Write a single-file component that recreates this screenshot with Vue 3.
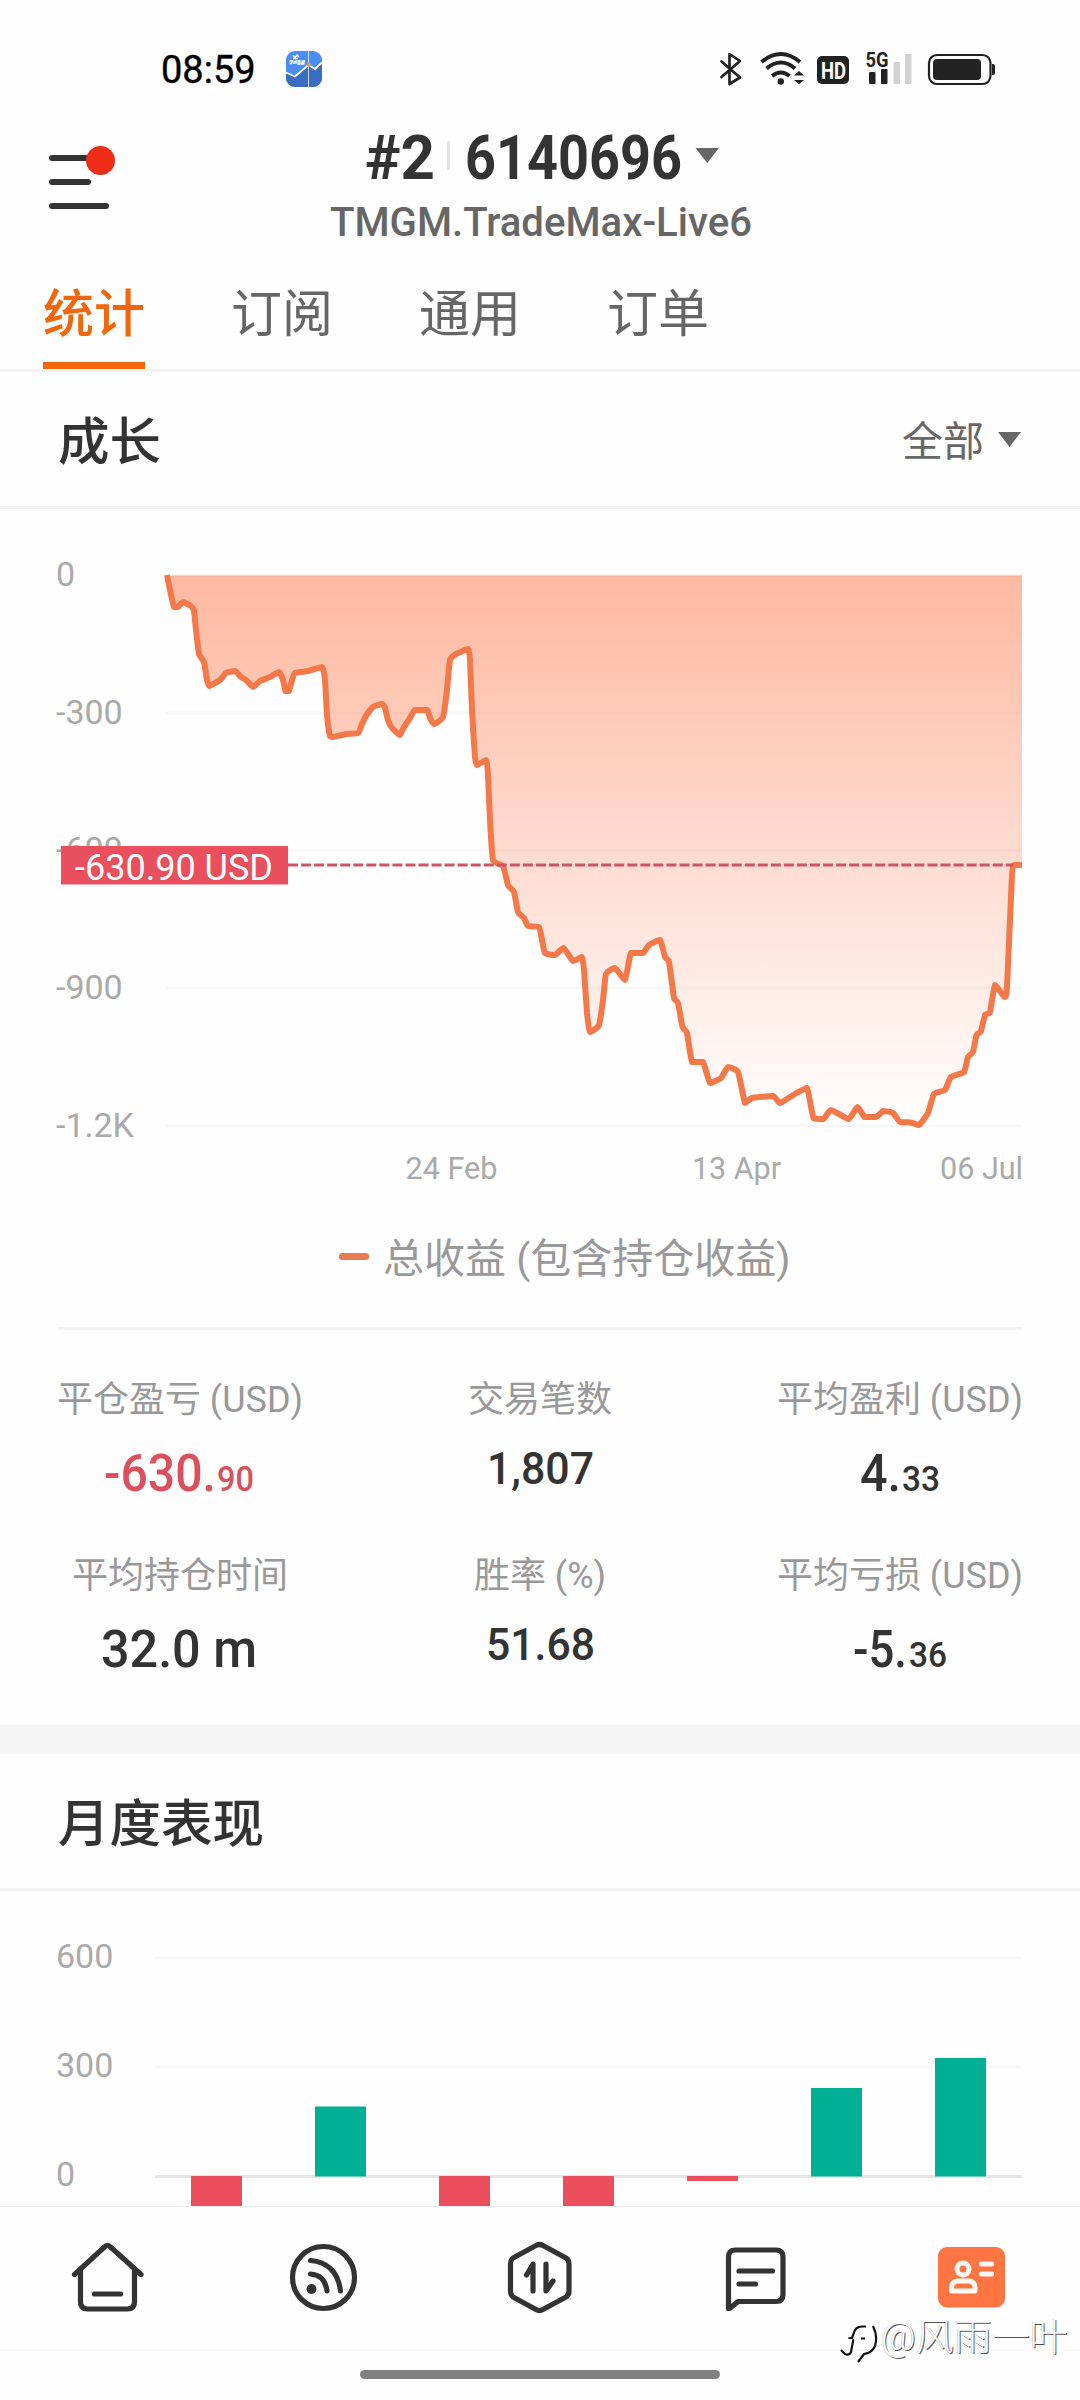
<script setup>
const tabs = ['统计', '订阅', '通用', '订单']

const points = [
  [167, 575], [170, 590], [174, 607], [178, 607], [183, 602], [191, 606], [194, 611], [196, 630], [199, 654],
  [204, 662], [207, 680], [209.5, 686], [215, 683], [220, 680], [226, 673], [235, 671], [241, 677], [246, 680],
  [253, 687], [260, 681], [270, 677], [279, 672], [283, 680], [285.5, 691], [289, 691], [292, 680], [295, 673],
  [308, 671], [322, 667], [325, 680], [327, 715], [330, 736], [333, 737], [346, 734], [358, 733], [362, 724],
  [366, 716], [373, 707], [382, 704], [385, 708], [388, 720], [392, 728], [400, 735], [404, 727], [410, 718],
  [415, 710], [427, 710], [430, 718], [434, 724], [443, 717], [447, 690], [450, 660], [456, 654], [468, 649],
  [470, 660], [472, 710], [475, 757], [477, 765], [486, 760], [488, 775], [490, 820], [493, 860], [503, 866],
  [508, 885], [514, 892], [518, 912], [524, 918], [528, 926], [539, 927], [542, 940], [545, 953], [555, 955],
  [563.5, 948], [573, 961], [582, 957], [584, 970], [587, 1013], [590, 1032], [599, 1025], [603, 1000],
  [606, 974], [615, 968], [625, 980], [631, 953], [643, 953], [649, 945], [660, 940], [665, 957], [669, 962],
  [674, 998], [678, 1003], [682.5, 1027], [687, 1033], [692, 1062], [703, 1062], [710, 1083], [721, 1078],
  [728, 1067], [738, 1072], [745, 1103], [752, 1098], [773, 1096], [780, 1103], [795, 1094], [807, 1088],
  [813.5, 1118], [823.5, 1119], [831, 1110], [848.5, 1119], [857.5, 1107], [864.6, 1117], [876, 1117],
  [883.5, 1111], [893, 1113], [900, 1122], [911, 1122.5], [919, 1125], [928, 1113], [934, 1094], [945, 1090],
  [951, 1077], [964, 1072], [968, 1057], [973, 1052], [976.5, 1035], [981, 1031], [985, 1015], [990, 1012],
  [995, 985], [1004.6, 997], [1007, 987], [1012, 875], [1014, 865], [1022, 865],
]

const smooth = (pts, k = 0.08) => {
  let d = `M${pts[0][0]} ${pts[0][1]}`
  for (let i = 0; i < pts.length - 1; i++) {
    const a = pts[i - 1] || pts[i]
    const b = pts[i]
    const c = pts[i + 1]
    const e = pts[i + 2] || c
    const lo = Math.min(b[1], c[1])
    const hi = Math.max(b[1], c[1])
    const clamp = (v) => Math.max(lo, Math.min(hi, v))
    d += `C${b[0] + (c[0] - a[0]) * k} ${clamp(b[1] + (c[1] - a[1]) * k)} ${c[0] - (e[0] - b[0]) * k} ${clamp(c[1] - (e[1] - b[1]) * k)} ${c[0]} ${c[1]}`
  }
  return d
}
const line = smooth(points)
const area = `${line}L1022 575.5L167 575.5Z`

const growthAxis = [
  { t: '0', y: 575.5 },
  { t: '-300', y: 713 },
  { t: '-600', y: 850.5 },
  { t: '-900', y: 988 },
  { t: '-1.2K', y: 1126 },
]

// x / w position each run of digits inside a 300px wide cell
const stats = [
  { label: '平仓盈亏 (USD)', red: true, base: 61, runs: [{ t: '-630.', x: 74, w: 112, s: 51 }, { t: '90', x: 187, w: 37, s: 35 }] },
  { label: '交易笔数', base: 54, runs: [{ t: '1,807', x: 97, w: 107, s: 45 }] },
  { label: '平均盈利 (USD)', base: 61, runs: [{ t: '4.', x: 110, w: 41, s: 51 }, { t: '33', x: 152, w: 38, s: 35 }] },
  { label: '平均持仓时间', base: 61, runs: [{ t: '32.0 m', x: 71, w: 156, s: 51 }] },
  { label: '胜率 (%)', base: 54, runs: [{ t: '51.68', x: 96, w: 109, s: 45 }] },
  { label: '平均亏损 (USD)', base: 61, runs: [{ t: '-5.', x: 103, w: 54, s: 51 }, { t: '36', x: 159, w: 38, s: 35 }] },
]

const monthAxis = [
  { t: '600', y: 1958, c: '#f7f7f7' },
  { t: '300', y: 2067, c: '#f7f7f7' },
  { t: '0', y: 2176.5, c: '#e6e6e6' },
]
const bars = [
  { x: 191, y: 2176, h: 40 },
  { x: 315, y: 2106.5, h: 70, up: true },
  { x: 439, y: 2176, h: 40 },
  { x: 563, y: 2176, h: 40 },
  { x: 687, y: 2176, h: 5 },
  { x: 811, y: 2088, h: 88.5, up: true },
  { x: 935, y: 2058, h: 118.5, up: true },
]
</script>

<template>
  <div class="screen">
    <div class="status">
      <div class="status-left">
        <span class="clock">08:59</span>
        <svg width="36" height="36" viewBox="0 0 36 36">
          <clipPath id="appclip"><rect width="36" height="36" rx="9" /></clipPath>
          <g clip-path="url(#appclip)">
            <rect width="36" height="36" fill="#4a8df5" />
            <path d="M0 21.500 9 25.500 22.500 14 29 18 36 11.500V36H0Z" fill="#3a6cc0" />
            <path d="M0 21.500 9 25.500 22.500 14 29 18 36 11.500" fill="none" stroke="#fff" stroke-width="1.800" />
            <path d="M22.500 0V36" stroke="#cfdcf2" stroke-width="1" />
            <circle cx="22.800" cy="13.500" r="2" fill="#d99a52" />
            <path d="M7 4.500l2 2 2-2.500 2 2M7 7.500h5M3.500 10h3l-1 2.500h-2M8 10v3M8 11l2-1v3M12 10h2v3h-2zM19 10h-3v1.500h2V13h-3" fill="none" stroke="#fff" stroke-width="1.300" />
          </g>
        </svg>
      </div>
      <svg class="status-icons" width="280" height="40" viewBox="718 49 280 40">
        <path d="M721.500 61.500 740 77.500 729.500 84V54L740 61 721.500 77" fill="none" stroke="#222" stroke-width="2.700" stroke-linejoin="round" stroke-linecap="round" />
        <g fill="none" stroke="#222" stroke-width="4">
          <path d="M761.500 62Q781 46 800 62" />
          <path d="M766.500 68.500Q781 56.500 795 68.500" />
          <path d="M772 76Q781 69 789.500 76" />
        </g>
        <circle cx="780.800" cy="81.500" r="3.200" fill="#222" />
        <path d="M794 75.500 799 71 804 75.500ZM794 80 799 84.500 804 80Z" fill="#222" />
        <rect x="817" y="56" width="32" height="28" rx="5" fill="#222" />
        <text x="821" y="78.500" font-size="23.500" font-weight="700" fill="#fff" textLength="25" lengthAdjust="spacingAndGlyphs">HD</text>
        <text x="865.500" y="67" font-size="20" font-weight="700" fill="#222" textLength="23" lengthAdjust="spacingAndGlyphs">5G</text>
        <rect x="869" y="72" width="6.500" height="12" rx="1" fill="#222" />
        <rect x="881" y="69" width="6.500" height="15" rx="1" fill="#222" />
        <rect x="893.500" y="62" width="6.500" height="22" rx="1" fill="#d2d2d2" />
        <rect x="905" y="54" width="6.500" height="30" rx="1" fill="#d2d2d2" />
        <rect x="929" y="55" width="61.500" height="29" rx="8" fill="none" stroke="#222" stroke-width="2.200" />
        <rect x="933" y="59" width="48" height="21" rx="4" fill="#222" />
        <path d="M992 64h1q2 0 2 2v7q0 2-2 2h-1Z" fill="#222" />
      </svg>
    </div>

    <header class="header">
      <svg class="menu" width="70" height="66" viewBox="48 145 70 66">
        <path d="M52 158H106M52 182H88M52 206H106" stroke="#333" stroke-width="6" stroke-linecap="round" />
        <circle cx="100.500" cy="160.500" r="14.500" fill="#ee2d17" />
      </svg>
      <svg class="account" width="440" height="130" viewBox="320 120 440 130">
        <g font-weight="700" font-size="61" fill="#333">
          <text x="365" y="179" textLength="70" lengthAdjust="spacingAndGlyphs">#2</text>
          <text x="465" y="179" textLength="217" lengthAdjust="spacingAndGlyphs">6140696</text>
        </g>
        <rect x="447" y="141" width="3" height="29" fill="#e5e5e5" />
        <path d="M695.500 148H719L707.200 163Z" fill="#666" />
        <text x="330" y="236" font-size="40.500" font-weight="500" fill="#666" textLength="422" lengthAdjust="spacingAndGlyphs">TMGM.TradeMax-Live6</text>
      </svg>
    </header>

    <nav class="tabs">
      <div v-for="(t, i) in tabs" :key="t" class="tab" :class="{ active: i === 0 }">{{ t }}</div>
    </nav>

    <main class="content">
      <div class="section-head growth-head">
        <h2>成长</h2>
        <div class="filter">
          <span>全部</span>
          <svg width="23" height="15" viewBox="0 0 23 15"><path d="M0 0H23L11.500 15Z" fill="#666" /></svg>
        </div>
      </div>

      <svg class="growth" width="1080" height="691" viewBox="0 509 1080 691">
        <defs>
          <linearGradient id="fade" x1="0" y1="575" x2="0" y2="1126" gradientUnits="userSpaceOnUse">
            <stop offset="0" stop-color="#ff7343" stop-opacity="0.5" />
            <stop offset="1" stop-color="#ff7343" stop-opacity="0" />
          </linearGradient>
        </defs>
        <g v-for="g in growthAxis" :key="g.t">
          <rect x="166" :y="g.y - 1.500" width="856" height="3" fill="#f7f7f7" />
          <text x="56" :y="g.y + 10.500" class="axis">{{ g.t }}</text>
        </g>
        <path :d="area" fill="url(#fade)" />
        <path :d="line" fill="none" stroke="#f57848" stroke-width="6" stroke-linejoin="round" />
        <path d="M288 865H1013" stroke="#cf5467" stroke-width="3.200" stroke-dasharray="10 3.050" />
        <rect x="61" y="846" width="227" height="38.500" fill="#e94f5d" />
        <text x="75" y="879.500" font-size="36" fill="#fff" textLength="198" lengthAdjust="spacingAndGlyphs">-630.90 USD</text>
        <g class="dates">
          <text x="405.500" y="1179" textLength="92" lengthAdjust="spacingAndGlyphs">24 Feb</text>
          <text x="692" y="1179" textLength="89" lengthAdjust="spacingAndGlyphs">13 Apr</text>
          <text x="940" y="1179" textLength="83" lengthAdjust="spacingAndGlyphs">06 Jul</text>
        </g>
      </svg>

      <div class="legend"><i></i><span>总收益 (包含持仓收益)</span></div>
      <div class="rule"></div>

      <div class="stats">
        <div v-for="s in stats" :key="s.label" class="stat">
          <div class="label">{{ s.label }}</div>
          <svg width="300" height="80" viewBox="0 0 300 80">
            <text v-for="r in s.runs" :key="r.t" :x="r.x" :y="s.base" :font-size="r.s" :textLength="r.w"
              lengthAdjust="spacingAndGlyphs" font-weight="500" :fill="s.red ? '#dc4f5c' : '#333'">{{ r.t }}</text>
          </svg>
        </div>
      </div>

      <div class="band"></div>
      <div class="section-head month-head"><h2>月度表现</h2></div>

      <svg class="months" width="1080" height="315" viewBox="0 1891 1080 315">
        <g v-for="g in monthAxis" :key="g.t">
          <rect x="155" :y="g.y - 1.500" width="867" height="3" :fill="g.c" />
          <text x="56" :y="g.y + 9.500" class="axis">{{ g.t }}</text>
        </g>
        <rect v-for="b in bars" :key="b.x" :x="b.x" :y="b.y" width="51" :height="b.h" :fill="b.up ? '#00b094' : '#eb4f5e'" />
      </svg>
    </main>

    <footer class="bottom">
      <svg width="76" height="76" viewBox="70 2240 76 76" class="ic">
        <path d="M74.500 2274.500 104.500 2247Q107.500 2243.500 110.500 2247L141 2274.500M80.500 2269V2302Q80.500 2309 87.500 2309H127.500Q134.500 2309 134.500 2302V2269M94.500 2294H120.500" />
      </svg>
      <svg width="76" height="76" viewBox="286 2240 76 76" class="ic">
        <ellipse cx="323.500" cy="2277.500" rx="31" ry="31" />
        <path d="M310.500 2260.500Q337 2263 340.500 2291M310.500 2274Q325 2275 327 2291" />
        <circle cx="311.500" cy="2289" r="5" fill="#333" stroke="none" />
      </svg>
      <svg width="76" height="76" viewBox="502 2240 76 76" class="ic">
        <path d="M536 2245.500Q539.500 2243.500 543 2245.500L566 2258Q569 2260 569 2264V2291Q569 2295 566 2297L543 2309.500Q539.500 2311.500 536 2309.500L513 2297Q510.500 2295 510.500 2291V2264Q510.500 2260 513 2258Z" />
        <path d="M533 2291V2264L526.500 2275M546 2264V2291L553 2281" />
      </svg>
      <svg width="76" height="76" viewBox="718 2240 76 76" class="ic">
        <path d="M728.500 2308.500V2257Q728.500 2250 735.500 2250H776Q783 2250 783 2257V2294.500Q783 2301.500 776 2301.500H738L729.500 2308.500ZM739 2271H772.500M739 2284H755.500" />
      </svg>
      <svg width="76" height="76" viewBox="934 2240 76 76">
        <rect x="938" y="2247" width="67" height="60.500" rx="9" fill="#ff7443" />
        <g fill="none" stroke="#fff8f3" stroke-width="5" stroke-linecap="round" stroke-linejoin="round">
          <circle cx="963" cy="2269" r="6" />
          <path d="M951.500 2291V2288Q951.500 2281 958.500 2281H968Q975 2281 975 2288V2291ZM981.500 2264H991.500M981.500 2274H991.500" />
        </g>
      </svg>
    </footer>
    <div class="gesture"><i></i></div>

    <div class="watermark">
      <svg width="38" height="42" viewBox="840 2324 38 42">
        <path d="M866 2328.500H862Q855 2328.500 853.500 2336L852 2340H848.500M853.500 2341L851 2354Q849 2358 845 2356L841 2352M861 2340.500H865M873 2328Q878 2338 875 2348Q872 2355 864 2356L858 2364" fill="none" stroke="#111" stroke-width="2.200" />
        <path d="M867 2331H863Q858 2331 856 2338L854 2352M871 2330Q875 2339 872 2347Q869 2353 861 2354" fill="none" stroke="#fff" stroke-width="1.600" />
      </svg>
      <span>@风雨一叶</span>
    </div>
  </div>
</template>

<style>
body { margin: 0; background: #fefefe; }
</style>

<style scoped>
.screen {
  position: relative;
  width: 1080px;
  height: 2400px;
  display: flex;
  flex-direction: column;
  overflow: hidden;
  background: #fefefe;
  color: #333;
  font-family: Roboto, "Noto Sans CJK SC", sans-serif;
}
svg { display: block; flex: none; }
.status {
  height: 120px;
  flex: none;
  box-sizing: border-box;
  padding: 49px 82px 0 161px;
  display: flex;
  justify-content: space-between;
  align-items: flex-start;
}
.status-left { display: flex; align-items: center; gap: 28px; height: 40px; }
.clock {
  width: 97px;
  font-size: 38px;
  line-height: 42px;
  padding-top: 2px;
  color: #000;
  white-space: nowrap;
  -webkit-text-stroke: 0.4px #000;
}
.header { height: 149px; flex: none; display: flex; align-items: flex-start; padding-left: 48px; }
.menu { margin-top: 25px; }
.account { margin-left: 202px; }
.tabs {
  height: 103px;
  flex: none;
  box-sizing: border-box;
  border-bottom: 3px solid #f2f2f2;
  padding-left: 43px;
  display: flex;
  gap: 86px;
}
.tab {
  width: 102px;
  height: 100px;
  box-sizing: border-box;
  font-size: 51px;
  line-height: 92px;
  color: #666;
  white-space: nowrap;
}
.tab.active { color: #f4660c; font-weight: 500; border-bottom: 7px solid #f4660c; }
.content { height: 1834px; flex: none; overflow: hidden; }
.section-head {
  box-sizing: border-box;
  display: flex;
  align-items: center;
  justify-content: space-between;
  padding: 0 59px 0 58px;
  border-bottom: 3px solid #f2f2f2;
}
.growth-head { height: 137px; }
.month-head { height: 137px; }
h2 { margin: 0; padding-top: 8px; font-size: 51.5px; font-weight: 500; line-height: 60px; }
.filter { display: flex; align-items: center; gap: 14px; font-size: 41px; line-height: 50px; color: #666; }
.filter span { padding-top: 6px; }
.axis { font-size: 34px; fill: #aaa; }
.dates { font-size: 31px; fill: #aaa; }
.legend {
  height: 127px;
  box-sizing: border-box;
  padding: 34px 0 0 339px;
  display: flex;
  align-items: flex-start;
  font-size: 41px;
  line-height: 50px;
  color: #999;
}
.legend i { width: 30px; height: 7px; margin: 18.500px 14px 0 0; border-radius: 3px; background: #e97c50; }
.rule { height: 3px; margin: 0 58px; background: #f3f3f3; }
.stats {
  height: 395px;
  box-sizing: border-box;
  padding: 47px 30px 0;
  display: grid;
  grid-template-columns: 300px 300px 300px;
  grid-template-rows: 176px 176px;
  column-gap: 60px;
}
.label { height: 53px; font-size: 36px; line-height: 47px; color: #999; text-align: center; white-space: nowrap; }
.band { height: 29px; background: #f5f5f5; }
.bottom {
  height: 145px;
  flex: none;
  box-sizing: border-box;
  border-top: 1px solid #ededed;
  border-bottom: 2px solid #fafafa;
  display: flex;
  justify-content: space-around;
  padding-top: 33px;
}
.ic { fill: none; stroke: #333; stroke-width: 5.2; stroke-linecap: round; stroke-linejoin: round; }
.gesture { display: flex; justify-content: center; padding-top: 19px; }
.gesture i { width: 360px; height: 9px; border-radius: 5px; background: #808080; }
.watermark {
  position: absolute;
  left: 840px;
  top: 2310px;
  display: flex;
  align-items: center;
  gap: 3px;
  font-size: 38px;
  line-height: 54px;
  font-weight: 300;
  color: #fff;
  white-space: nowrap;
  text-shadow: 1px 1px 0 rgba(0, 0, 0, 0.7), -0.500px -0.500px 0 rgba(0, 0, 0, 0.3);
}
.watermark svg { margin-top: 12px; }
</style>
